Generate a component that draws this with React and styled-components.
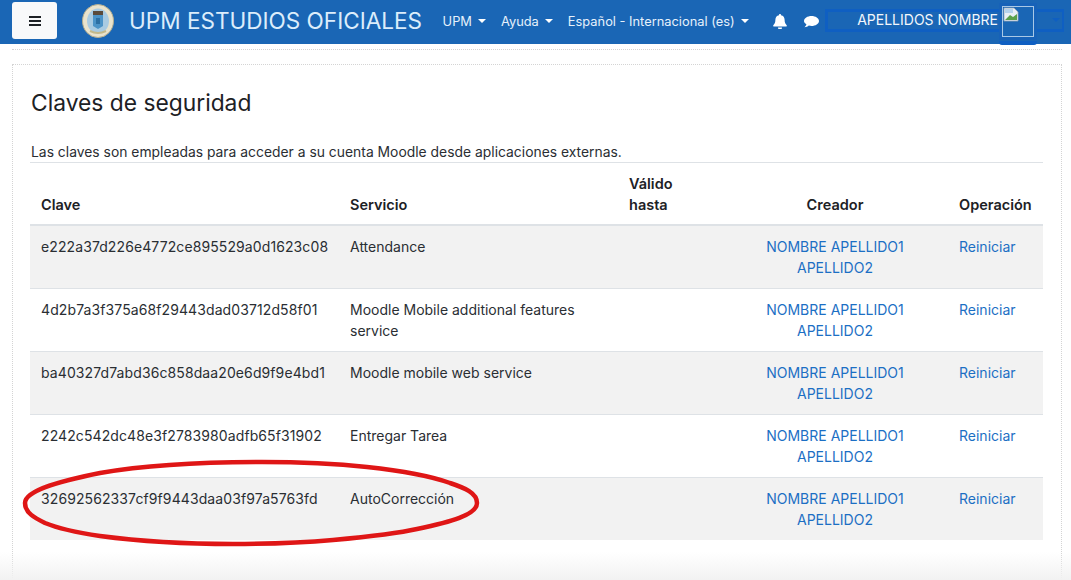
import React from "react";
import styled, { createGlobalStyle } from "styled-components";

const Global = createGlobalStyle`
  html, body { margin: 0; padding: 0; height: 580px; overflow: hidden; background: #fff; }
  body { font-family: Inter, "Liberation Sans", sans-serif; font-size: 14px; line-height: 21px; color: #1d2125; }
  * { box-sizing: border-box; }
`;
const Page = styled.div`position: relative; width: 1071px; height: 580px; overflow: hidden;`;
const Nav = styled.header`display: flex; align-items: center; height: 44px; background: #1a66b5; color: #fff; padding-left: 12px;`;
const Burger = styled.button`
  width: 45px; height: 37px; border: 0; border-radius: 3px; background: #f8f9fa; display: flex; align-items: center; justify-content: center; padding: 0; margin-top: -3px;
`;
const Logo = styled.svg`width: 32px; height: 34px; margin-left: 25px; flex: none; margin-top: -2px;`;
const Brand = styled.div`font-size: 22.55px; margin-left: 15px; margin-top: -3px; color: #dcedfb; white-space: nowrap;`;
const Menu = styled.div`display: flex; align-items: center; margin-left: 20.5px; gap: 15px; margin-top: -2px;`;
const MenuItem = styled.span`display: inline-flex; align-items: center; font-size: 12.85px; color: #e6f1fb; white-space: nowrap;`;
const Caret = styled.i`display: inline-block; margin-left: 6px; border-top: 4px solid #fff; border-left: 4px solid transparent; border-right: 4px solid transparent;`;
const Icons = styled.div`display: flex; align-items: center; gap: 17px; margin-left: 24.5px; margin-top: -2px;`;
const UserBox = styled.div`
  position: relative; display: flex; align-items: center; margin-left: 6px; width: 239px; height: 23px; margin-top: -4px;
  border: 3px solid #0f5fc2; border-right-width: 2px;
`;
const UserName = styled.span`font-size: 14px; color: #f2f7fc; margin-left: 29px; white-space: nowrap; margin-top: -2px;`;
const Avatar = styled.div`
  position: absolute; left: 174px; top: -6px; width: 32px; height: 31px; border: 1px solid #a9c8e6; background: #1a66b5;
  box-shadow: 0 0 0 3px #1762b8;
  &::after { content: ""; position: absolute; left: -4px; right: -4px; top: 34px; height: 4px; background: #0f5fc2; border-radius: 0 0 3px 3px; }
`;
const UserCaret = styled.i`position: absolute; right: 2px; top: 6px; border-top: 4px solid #0f5fc2; border-left: 4px solid transparent; border-right: 4px solid transparent;`;
const Main = styled.main`padding: 5px 9px 0 12px;`;
const Shadow = styled.div`height: 0; border-top: 1px dotted #d4d4d4; margin-bottom: 14px;`;
const Card = styled.section`border: 1px dotted #d4d4d4; border-bottom: 0; padding: 0 18px 0 17px; height: 520px;`;
const Title = styled.h2`font-size: 22.8px; line-height: 28px; font-weight: 400; margin: 24px 0 0; padding-left: 1px; color: #1d2125;`;
const Intro = styled.p`margin: 25px 0 0; padding-left: 1px; font-size: 13.88px; line-height: 20px; height: 20px; color: #2a2e33;`;
const Table = styled.table`width: 1013px; table-layout: fixed; border-collapse: collapse; border-top: 1px solid #dee2e6;`;
const Th = styled.th`
  font-weight: 600; text-align: ${p => p.$center ? "center" : "left"}; vertical-align: bottom; padding: 10px 11px 9px; line-height: 21px; font-size: 14.5px;
  border-bottom: 2px solid #dee2e6;
`;
const Row = styled.tr`background: ${p => p.$odd ? "#f2f2f2" : "transparent"}; border-bottom: 1px solid #dee2e6; &:last-child{border-bottom:0;}`;
const Td = styled.td`padding: 10px 11px 10px; vertical-align: top; line-height: 21px; height: 62px; font-size: 14px; text-align: ${p => p.$center ? "center" : "left"};`;
const Hash = styled(Td)`letter-spacing: .1px; white-space: nowrap; color: #2a2e33;`;
const Service = styled(Td)`color: #2a2e33; padding-right: 30px;`;
const A = styled.a`color: #1c6fc4; text-decoration: none;`;
const Ring = styled.svg`position: absolute; left: 0; top: 440px; width: 500px; height: 120px; pointer-events: none;`;
const Fade = styled.div`position: absolute; left: 0; right: 0; bottom: 0; height: 28px; background: linear-gradient(#ffffff00, #f2f2f2); pointer-events: none;`;

const rows = [
  ["e222a37d226e4772ce895529a0d1623c08", "Attendance"],
  ["4d2b7a3f375a68f29443dad03712d58f01", "Moodle Mobile additional features service"],
  ["ba40327d7abd36c858daa20e6d9f9e4bd1", "Moodle mobile web service"],
  ["2242c542dc48e3f2783980adfb65f31902", "Entregar Tarea"],
  ["32692562337cf9f9443daa03f97a5763fd", "AutoCorrección"],
];

export default function App() {
  return (
    <Page>
      <Global />
      <Nav>
        <Burger aria-label="menu">
          <svg width="12" height="10" viewBox="0 0 12 10"><path d="M0 1h12M0 5h12M0 9h12" stroke="#1d2125" strokeWidth="1.8" /></svg>
        </Burger>
        <Logo viewBox="0 0 32 34">
          <ellipse cx="16" cy="17" rx="15.500" ry="16.500" fill="#e9e3cd" />
          <ellipse cx="16" cy="17" rx="15.500" ry="16.500" fill="none" stroke="#b3ad8e" strokeWidth="1" />
          <ellipse cx="16" cy="17" rx="11" ry="12.500" fill="#a9cbe2" />
          <path d="M11 7h10v4H11z" fill="#5a4a3a" />
          <path d="M11 11h10v11l-5 3-5-3z" fill="#4b93c7" />
          <path d="M14 14h4v6h-4z" fill="#2b6fa3" />
          <path d="M8 27q8 4 16 0" stroke="#c2b98a" strokeWidth="2" fill="none" />
        </Logo>
        <Brand>UPM ESTUDIOS OFICIALES</Brand>
        <Menu>
          <MenuItem>UPM<Caret /></MenuItem>
          <MenuItem>Ayuda<Caret /></MenuItem>
          <MenuItem>Español - Internacional (es)<Caret /></MenuItem>
        </Menu>
        <Icons>
          <svg width="14" height="15" viewBox="0 0 14 15"><path d="M7 0a1 1 0 0 1 1 1.200c2.400.4 3.600 2.300 3.600 4.600 0 3.200 1 4.200 2.200 5.600.3.4 0 1-.5 1H.7c-.5 0-.8-.6-.5-1C1.400 10 2.400 9 2.400 5.800 2.400 3.500 3.600 1.600 6 1.200A1 1 0 0 1 7 0zM5 13.500h4a2 2 0 0 1-4 0z" fill="#fff" /></svg>
          <svg width="15" height="13" viewBox="0 0 15 13"><path d="M7.500 1C11.500 1 15 3.200 15 6s-3.500 5-7.500 5c-1 0-1.900-.1-2.700-.4C3.800 11.500 2.200 12.300.5 12.300c1-.9 1.700-2 1.900-3C.9 8.400 0 7.300 0 6c0-2.800 3.500-5 7.500-5z" fill="#fff" /></svg>
        </Icons>
        <UserBox>
          <UserName>APELLIDOS NOMBRE</UserName>
          <Avatar>
            <svg width="16" height="15" viewBox="0 0 16 15" style={{ display: "block" }}>
              <path d="M1 1h10l4 4v9H1z" fill="#e8eef5" stroke="#9aa7b5" strokeWidth=".8" />
              <path d="M2 13l5-5 3 2 4-3v6z" fill="#5aa04a" />
              <path d="M2 2h8v4H2z" fill="#b5d2ec" />
            </svg>
          </Avatar>
          <UserCaret />
        </UserBox>
      </Nav>
      <Main>
        <Shadow />
        <Card>
          <Title>Claves de seguridad</Title>
          <Intro>Las claves son empleadas para acceder a su cuenta Moodle desde aplicaciones externas.</Intro>
          <Table>
            <colgroup>
              <col style={{ width: 309 }} /><col style={{ width: 279 }} /><col style={{ width: 104 }} /><col style={{ width: 226 }} /><col style={{ width: 95 }} />
            </colgroup>
            <thead>
              <tr>
                <Th>Clave</Th><Th>Servicio</Th><Th>Válido hasta</Th><Th $center>Creador</Th><Th>Operación</Th>
              </tr>
            </thead>
            <tbody>
              {rows.map(([h, s], i) => (
                <Row key={h} $odd={i % 2 === 0}>
                  <Hash>{h}</Hash>
                  <Service>{s}</Service>
                  <Td />
                  <Td $center><A>NOMBRE APELLIDO1<br />APELLIDO2</A></Td>
                  <Td><A>Reiniciar</A></Td>
                </Row>
              ))}
            </tbody>
          </Table>
        </Card>
      </Main>
      <Fade />
      <Ring viewBox="0 440 500 120">
        <path d="M262 462C200 462 140 466 100 473C65 480 25 490 25 503C25 513 35 518 45 523C62 530 80 533 100 536C145 542 190 544 233 544C270 544 300 543 333 540C365 537 395 534 417 529C450 522 477 515 477 503C477 493 465 488 450 483C425 474 395 470 367 467C330 463 295 462 262 462Z" fill="none" stroke="#df1616" strokeWidth="4.500" />
      </Ring>
    </Page>
  );
}
